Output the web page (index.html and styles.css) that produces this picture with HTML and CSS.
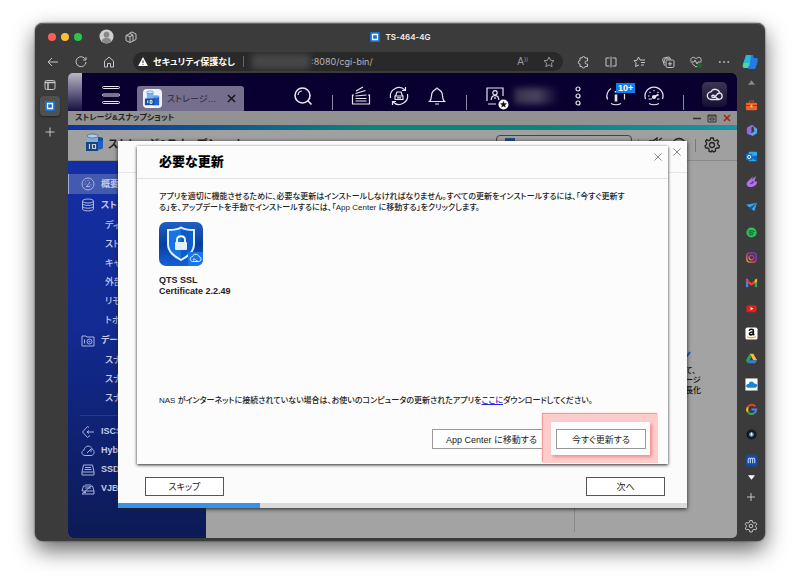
FILE: index.html
```
<!DOCTYPE html>
<html lang="ja">
<head>
<meta charset="utf-8">
<title>TS-464-4G</title>
<link rel="stylesheet" href="styles.css">
</head>
<body>
<div class="window">
  <header class="titlebar">
    <div class="lights"><i class="red"></i><i class="yellow"></i><i class="green"></i></div>
    <svg class="avatar" viewBox="0 0 16 16"><circle cx="8" cy="8" r="7.500" fill="#d0cdca"/><circle cx="8" cy="6" r="3" fill="#888"/><path d="M3 13c0-5 10-5 10 0a7 7 0 0 1-10 0z" fill="#888"/></svg>
    <svg class="ico" viewBox="0 0 14 14"><path d="M5 3.500 8 2l4 2v5.500L9 11M2 5.500l4-2 3 1.500v6L6 12.500 2 10.500zM9 5 6 6.500v6M2 5.500l4 1"/></svg>
    <div class="doc-title"><svg viewBox="0 0 10 10"><rect width="10" height="10" rx="1" fill="#1672d2"/><path d="M2.500 2.500h5v5h-5z" fill="none" stroke="#fff" stroke-width="1.300"/></svg>TS-464-4G</div>
  </header>

  <div class="toolbar">
    <nav class="history">
      <svg class="ico" viewBox="0 0 14 14"><path d="M12 7H2M6 3 2 7l4 4"/></svg>
      <svg class="ico" viewBox="0 0 14 14"><path d="M11.500 4.500A5 5 0 1 0 12 7M12 2v3H9"/></svg>
      <svg class="ico" viewBox="0 0 14 14"><path d="M2.500 6 7 2l4.500 4v6H8.500V8.500h-3V12h-3z"/></svg>
    </nav>
    <div class="address">
      <svg class="warn" viewBox="0 0 12 11"><path d="M6 0 12 11H0z" fill="#fff"/><path d="M6 4v3.500M6 8.500v1" stroke="#222" stroke-width="1.200"/></svg>
      <b>セキュリティ保護なし</b><i class="bar"></i><span class="smudge"></span><span class="url">:8080/cgi-bin/</span>
      <span class="read">A<sup>))</sup></span>
      <svg class="ico" viewBox="0 0 14 14"><path d="m7 2 1.500 3.300 3.500.4-2.600 2.400.7 3.600L7 9.900l-3.100 1.800.7-3.600L2 5.700l3.500-.4z" stroke="#999"/></svg>
    </div>
    <nav class="tools">
      <svg class="ico" viewBox="0 0 14 14"><path d="M4 3h2a1.500 1.500 0 0 1 3 0h2.500v3h-1a1.500 1.500 0 0 0 0 3h1v2.500H9a1.500 1.500 0 0 1-3 0H4V9a1.700 1.700 0 0 1 0-3.400z"/></svg>
      <svg class="ico" viewBox="0 0 14 14"><path d="M5.500 3H2v8h3.500M8.500 3H12v8H8.500M7 1.500v11"/></svg>
      <svg class="ico" viewBox="0 0 14 14"><path d="M7 10 3.500 11.500l.7-3.500L2 5.700l3-.4L6.500 2 8 5h5M9 7.500h4M9 10h3"/></svg>
      <svg class="ico" viewBox="0 0 14 14"><rect x="5" y="5" width="8" height="7.500" rx="1.500"/><path d="M9 6.800v4M7 8.800h4M3.500 10.500 1.500 4.500q0-1 1-1.300L7.500 2q1 0 1.500 1M3.200 8V5q0-1 1-1.200H10"/></svg>
      <svg class="ico" viewBox="0 0 14 14"><path d="M2 6C1 1 6 2 7 4c1-2 6-3 5 2M1.500 7H5l1-2 2 4 1-2h3.500M3 8.500 7 12l2-1.500"/><circle cx="10.500" cy="10.500" r="2.500" fill="#18681f" stroke="none"/></svg>
      <svg class="ico" viewBox="0 0 14 14"><path d="M2 7h1.700M6.200 7h1.700M10.400 7h1.700" stroke-width="1.700"/></svg>
    </nav>
    <svg class="copilot" viewBox="0 0 16 16"><path d="M4 1h6L8 12l-2 2H3c-2 0-3-1-2-4z" fill="#28b9d8"/><path d="M9 1h2l1 3h3c1 1 1 3 0 6l-2 5H6l2-4z" fill="#247be6"/><path d="M2 9h5l-1 5H3c-2 0-3-2-1-5z" fill="#55d4a0"/></svg>
  </div>

  <div class="body">
    <aside class="rail-left">
      <svg class="ico" viewBox="0 0 14 14"><rect x="2" y="2.500" width="10" height="9" rx="1.500"/><path d="M2 4.500h10M5 5v6" stroke-width="1.500"/></svg>
      <div class="pinned"><svg viewBox="0 0 10 10"><rect width="10" height="10" rx="1" fill="#1672d2"/><path d="M2.500 2.500h5v5h-5z" fill="none" stroke="#fff" stroke-width="1.300"/></svg></div>
      <svg class="ico add" viewBox="0 0 14 14"><path d="M7 2.500v9M2.500 7h9"/></svg>
    </aside>

    <main class="page">
      <div class="qts-bar">
        <span class="edge"></span>
        <svg class="burger" viewBox="0 0 18 20"><g fill="#0b0530" stroke="#e8e6ee"><rect x=".5" y="1.500" width="17" height="2" rx="1"/><rect x=".5" y="9" width="17" height="2" rx="1"/><rect x=".5" y="16.500" width="17" height="2" rx="1"/></g></svg>
        <div class="app-tab">
          <svg class="app-ico" viewBox="0 0 20 20"><rect width="20" height="20" rx="4" fill="#eef4fb"/><g fill="#2364cf"><path d="M10 8h7v9h-7z"/><ellipse cx="13.500" cy="8" rx="3.500" ry="1.500" fill="#67a4ee"/></g><path d="M4 3h7v8H4z" fill="#7cb2ee"/><ellipse cx="7.500" cy="3.500" rx="3.500" ry="1.500" fill="#d5e8fc" stroke="#2d77d4" stroke-width=".6"/><rect x="2" y="10" width="10" height="7" fill="#174f96"/><path d="M5 12v3M7.500 12h2v3h-2z" fill="none" stroke="#fff"/></svg>
          <span>ストレージ…</span>
          <svg class="x" viewBox="0 0 10 10"><path d="m1 1 8 8M9 1 1 9" stroke="#17131f" stroke-width="1.600"/></svg>
        </div>
        <div class="status">
          <svg viewBox="0 0 20 20"><circle cx="9.500" cy="9.500" r="7.500" stroke-width="1.600"/><path d="m15 15 3.500 3.500" stroke-width="1.600"/><path d="M5 9a4.500 4.500 0 0 1 4-4"/></svg><i></i>
          <svg viewBox="0 0 20 20"><path d="M3 9H1.500v9h17V9H17M4.500 15h11M4.500 12.500h11M4.500 10l11-1M4.500 7.500l10-3M5 5l7-4"/></svg>
          <svg viewBox="0 0 20 20"><path d="M1.500 12A8.700 8.700 0 0 1 16 4M18.500 8A8.700 8.700 0 0 1 4 16M16.500 1v3.500H13M3.500 19v-3.500H7M6.500 10 8 6h4l1.500 4M6 10h8v3.500H6zM8 11.800h4"/></svg>
          <svg viewBox="0 0 20 20"><path d="M2.500 15.500c2.500-2 1.500-5.500 2.500-8.500C6 4.500 8 4 9 3q1-2 2 0c1 1 3 1.500 4 4 1 3 0 6.500 2.500 8.500zM8 18h4"/></svg><i></i>
          <svg viewBox="0 0 20 20"><path d="M11 18H3M2 15V2h16v8M6 14l1.200-3.500L10 9.500l2.800 1L14 14M10 11v2"/><circle cx="10" cy="6.800" r="2.200"/><circle cx="18.500" cy="18.500" r="5" fill="#fff" stroke="none"/><path d="m18.500 15 1 2.300 2.500.2-1.900 1.600.6 2.400-2.200-1.300-2.200 1.300.6-2.400-1.900-1.600 2.500-.2z" fill="#111" stroke="none"/></svg>
        </div>
        <span class="user"></span>
        <div class="status">
          <svg viewBox="0 0 20 20"><circle cx="10" cy="3" r="2"/><circle cx="10" cy="10" r="2"/><circle cx="10" cy="17" r="2"/></svg>
          <div class="notice"><svg viewBox="0 0 20 20"><path d="M5 2.500a9 9 0 0 0-3.500 11M18.500 8v5.500M5 17.500q5 2.500 10 0"/><path d="M10 8.500v7M10 5v1.500" stroke-width="2.600"/></svg><b>10+</b></div>
          <svg viewBox="0 0 20 20"><path d="M1.500 13A9 9 0 1 1 18.500 13M5 17.500q5 2.500 10 0"/><path d="M4 10h1.500M5.500 6l1 .8M10 4v1.200M14.500 6l-1 .8M4.500 13H8M13 13h2.500" /><path d="m10 11 4.500-2.500" stroke-width="2"/><circle cx="10" cy="11" r="1.500" fill="#e8e6ee"/></svg><i></i>
        </div>
        <div class="cloud"><svg viewBox="0 0 20 16"><path d="M15 13.500H6A4.200 4.200 0 0 1 5.500 5a5.200 5.200 0 0 1 9.700 1.300A3.700 3.700 0 0 1 15 13.500c-2.500 0-3.500-2-5-3.500S6.300 8.300 6.500 10s2.500 1.500 3.500.500 2-3.700 5-4.200" fill="none" stroke="#e8e6ee" stroke-width="1.500"/></svg></div>
      </div>

      <div class="app-title"><b>ストレージ&amp;スナップショット</b>
        <svg viewBox="0 0 40 10"><path d="M1 5.500h8" stroke="#333" stroke-width="1.500"/><path d="M16 2h8v7h-8zM18 5h4v2h-4zM16 3h8" fill="none" stroke="#333"/><path d="m32 2 6 6M38 2l-6 6" stroke="#b01b1b" stroke-width="1.700"/></svg>
      </div>
      <div class="app-head">
        <svg class="logo" viewBox="0 0 20 20"><path d="M9 5h9v10c-2 2-6 2-9 1z" fill="#205fc4"/><ellipse cx="13.500" cy="6" rx="4.500" ry="2" fill="#174a9f"/><path d="M2 3h11v8H2z" fill="#84aed7"/><ellipse cx="7.500" cy="3" rx="5.500" ry="2" fill="#b8c8d8" stroke="#2960a8" stroke-width=".7"/><rect x="1" y="9" width="12" height="9" fill="#144580"/><path d="M4.500 11v5M7.500 11.500h3v4h-3z" fill="none" stroke="#ccc" stroke-width="1.200"/></svg>
        <b>ストレージ&amp;スナップショット</b>
        <div class="device"><i></i>外部ストレージデバイス</div>
        <div class="head-tools"><i></i><svg viewBox="0 0 16 16"><path d="M2 4h4l4-3v12M12 3l3-2"/></svg><svg viewBox="0 0 16 16"><circle cx="8" cy="8" r="6.500"/></svg><i></i>
        <svg viewBox="0 0 16 16"><circle cx="8" cy="8" r="2.500"/><path d="m6.700 1-.5 2-1.700.7-1.900-1L1.500 4.300l1.200 1.900L2.200 8l-1.200 1 .8 2 2-.1 1.300 1.300-.1 2 2 .8L8 13.500l1.500 1.500 2-.9-.1-2 1.300-1.200 2 .1.800-2L14 7.700l-.5-1.500 1-1.900-1.300-1.500-1.900 1-1.700-.7L9.200 1z"/></svg></div>
      </div>

      <div class="workspace">
        <nav class="side">
          <a class="main current"><svg viewBox="0 0 14 14"><circle cx="7" cy="7" r="6"/><path d="m6 9 3-4M3.500 7h1M7 3v1M9.500 8h1M4.500 4.500l.5.500M5 9.500h4"/></svg>概要</a>
          <a class="main"><svg viewBox="0 0 14 14"><ellipse cx="7" cy="3" rx="5.500" ry="2"/><path d="M1.500 3v8c0 2.500 11 2.500 11 0V3M1.500 5.500c0 2.500 11 2.500 11 0M1.500 8.300c0 2.500 11 2.500 11 0"/></svg>ストレージ</a>
          <a>ディスク</a><a>ストレージ</a><a>キャッシュ</a><a>外部</a><a>リモート</a><a>トポロジ</a>
          <a class="main data"><svg viewBox="0 0 14 14"><path d="M1 2h4l1 1h7v9H1zM3.500 5.500v4"/><circle cx="8.500" cy="7.500" r="2.500"/><circle cx="8.500" cy="7.500" r=".6"/></svg>データ</a>
          <a>スナップ</a><a>スナップ</a><a>スナップ</a>
          <hr>
          <a class="main"><svg viewBox="0 0 14 14"><path d="M8 2.500 6.500 1.500 1.500 7l5 5.500L9 10.500M6 7h7M8 5.500 6 7l2 1.500"/></svg>ISCSI</a>
          <a class="main"><svg viewBox="0 0 14 14"><path d="M4 11.500C0 11 0 7 3 6c1-5 7-5 8-1 3 1 3 6-1 6.500zM6 9l4-4v3"/></svg>Hybrid</a>
          <a class="main"><svg viewBox="0 0 14 14"><path d="M1 9 2.500 2h9L13 9v3H1zM1 9h12M3.500 6.500h7M4 4.500h6"/></svg>SSD</a>
          <a class="main"><svg viewBox="0 0 14 14"><path d="M1 9 2.500 4H4M10 4h1.500L13 9v3H1zM1 9h12M5 7V2M7 2v5M9 7V2M3 10.500h2"/></svg>VJBOD</a>
        </nav>
        <section class="content"><div class="notes"><svg viewBox="0 0 8 6"><path d="M0 5h2l3-4" fill="none" stroke="#244bb5" stroke-width="2"/></svg>て、<br>ージ<br>長化</div><span class="divider"></span></section>
      </div>

      <section class="wizard">
        <div class="wizard-head"><button class="close" aria-label="閉じる"><svg viewBox="0 0 8 8"><path d="m.5.500 7 7M7.500.500l-7 7"/></svg></button></div>
        <div class="wizard-foot"><button>スキップ</button><button>次へ</button></div>
        <div class="progress"><i></i></div>

        <div class="dialog" role="dialog" aria-labelledby="dialog-title">
          <div class="dialog-head"><h1 id="dialog-title">必要な更新</h1><button class="close" aria-label="閉じる"><svg viewBox="0 0 8 8"><path d="m.5.500 7 7M7.500.500l-7 7"/></svg></button></div>
          <div class="dialog-body">
            <p>アプリを適切に機能させるために、必要な更新はインストールしなければなりません。すべての更新をインストールするには、「今すぐ更新す<br>る」を、アップデートを手動でインストールするには、「App Center に移動する」をクリックします。</p>
            <svg class="cert" viewBox="0 0 44 44"><defs><linearGradient id="bg" x1="0" y1="0" x2="0" y2="1"><stop stop-color="#205fc0"/><stop offset=".5" stop-color="#083f9e"/><stop offset="1" stop-color="#1660d8"/></linearGradient><linearGradient id="sh" x1="0" x2="1"><stop offset=".5" stop-color="#1674e4"/><stop offset=".5" stop-color="#0d5ccb"/></linearGradient></defs><rect width="44" height="44" rx="7" fill="url(#bg)"/><path d="M22 5.500c4 2.500 8 2.500 13 2.500v14c0 8-6 12-13 16C15 34 9 30 9 22V8c5 0 9 0 13-2.500z" fill="url(#sh)" stroke="#dff2ff" stroke-width="2"/><path d="M18 21v-3c0-5 8-5 8 0v3" fill="none" stroke="#fff" stroke-width="1.800"/><rect x="16" y="20" width="12" height="8" rx="1" fill="#e2f0ff"/><path d="M29 30h15v7q0 7-7 7h-8z" fill="#1b75ea"/><path d="M39.500 39.500h-6c-3.500-1-2.500-5 0-5 1-3 5.500-3 6.500 0 3 1 2.500 5-.5 5-2 0-2.500-2-4-2.500s-1.500 1.300-.5 1.300" fill="none" stroke="#fff" stroke-width=".9"/></svg>
            <b class="pkg">QTS SSL<br>Certificate 2.2.49</b>
            <p class="offline">NAS がインターネットに接続されていない場合は、お使いのコンピュータの更新されたアプリを<a href="#">ここに</a>ダウンロードしてください。</p>
            <div class="actions"><button class="center">App Center に移動する</button><div class="marked"><button class="update">今すぐ更新する</button></div></div>
          </div>
        </div>
      </section>
    </main>

    <aside class="rail-right">
      <svg class="tri" viewBox="0 0 8 5"><path d="m4 0 4 5H0z" fill="#888"/></svg>
      <div class="apps">
        <svg viewBox="0 0 14 14"><path d="M5 4V2h4v2" fill="none" stroke="#b64217" stroke-width="1.300"/><rect x="1" y="4" width="12" height="8" rx="1" fill="#ed6226"/><path d="M1 7h12" stroke="#963818"/><path d="M6 6h2v3H6z" fill="#ffc184"/></svg>
        <svg viewBox="0 0 14 14"><path d="M7 1 2 4v6l3 2 2-2V4l3-2z" fill="#9268e3"/><path d="m9 2 4 3v5l-5 3-3-2 5-3z" fill="#5aa0eb"/></svg>
        <svg viewBox="0 0 14 14"><rect x="4" y="2" width="9" height="10" rx="1" fill="#35a9ec"/><path d="m4 7 9 5V6z" fill="#1268bd"/><rect x="1" y="4" width="7" height="7" rx="1" fill="#1473c6"/><circle cx="4.500" cy="7.500" r="1.700" fill="none" stroke="#fff"/></svg>
        <svg viewBox="0 0 14 14"><path d="M2 8 9 1 7 5l5-4-2 6h3c0 4-4 6-7 6C3 13 1 11 2 8z" fill="#b371ed"/><path d="m5 10 4-4v3z" fill="#493077"/></svg>
        <svg viewBox="0 0 14 14"><path d="m1 5 12-2-3 9-4-3z" fill="#36a5e4"/><path d="M5 8 13 3 6 11z" fill="#0d5d91"/></svg>
        <svg viewBox="0 0 14 14"><circle cx="7" cy="7" r="5.500" fill="#23c65b"/><path d="M4 5.500q4-1 6.500.5M4 7.500q3-.8 5.500.5M4.500 9.500q2.500-.5 4 .3" fill="none" stroke="#174524"/></svg>
        <svg viewBox="0 0 14 14"><defs><linearGradient id="ig" x1="1" y1="0" x2="0" y2="1"><stop stop-color="#7a36d5"/><stop offset=".5" stop-color="#dc2786"/><stop offset="1" stop-color="#ef9b33"/></linearGradient></defs><g fill="none" stroke="url(#ig)" stroke-width="1.500"><rect x="2" y="2" width="10" height="10" rx="3"/><circle cx="7" cy="7" r="2.500"/></g></svg>
        <svg viewBox="0 0 14 14"><path d="M1 3h2.500v9H1z" fill="#4285f4"/><path d="M10.500 3H13v9h-2.500z" fill="#34a853"/><path d="m1 3 6 4.500L13 3v3L7 10.500 1 6z" fill="#ea4335"/><path d="m10.500 4.800 2.500-2V6l-2.500 2z" fill="#fbbc04"/></svg>
        <svg viewBox="0 0 14 14"><rect x="1.500" y="3.500" width="11" height="7.500" rx="2" fill="#e61d1d"/><path d="m6 5.500 3 1.700L6 9z" fill="#fff"/></svg>
        <svg viewBox="0 0 14 14"><rect x=".5" y=".5" width="13" height="13" rx="2" fill="#fff"/><path d="M4.500 4C5 2 9 2 9 4v4l1 .8M9 5.500C4 5 4 8.500 6 8.500S9 7 9 6" fill="none" stroke="#111" stroke-width="1.700"/><path d="M2.500 10.500q5 2.500 9-.3" fill="none" stroke="#f39b21" stroke-width="1.200"/></svg>
        <svg viewBox="0 0 14 14"><path d="M5 2h4l4 7H9z" fill="#f8bd2b"/><path d="M5 2 1 9l2 3 4-7z" fill="#25a55a"/><path d="M5 9h8l-2 3H3z" fill="#3b78e7"/></svg>
        <svg viewBox="0 0 14 14"><rect x=".5" y=".5" width="13" height="13" fill="#fff"/><path d="M3 10.500c-3-1-2-4 1-4 1-4 5-3 6-.5 4 0 4 4 1 4.500z" fill="#1685d8"/></svg>
        <svg viewBox="0 0 14 14"><g fill="none" stroke-width="2.200"><path d="M11 3.500A5 5 0 0 0 3 4.500" stroke="#ea4335"/><path d="M3 4.500a5 5 0 0 0 0 5" stroke="#fbbc04"/><path d="M3 9.500a5 5 0 0 0 7 1.500" stroke="#34a853"/><path d="M10 11a5 5 0 0 0 2-4H7" stroke="#4285f4"/></g></svg>
        <svg viewBox="0 0 14 14"><circle cx="7" cy="7" r="5.500" fill="#111a27"/><circle cx="7" cy="7" r="2.500" fill="#86a4b6"/><path d="M7 5v3" stroke="#fff"/></svg>
        <svg viewBox="0 0 14 14"><rect x=".5" y=".5" width="13" height="13" rx="2" fill="#1748a0"/><path d="M3.500 10V6c0-2 2.300-2 2.300 0v4-4c0-2 2.400-2 2.400 0v4-4c0-2 2.300-2 2.300 0v4" fill="none" stroke="#a9c8f6" stroke-width="1.300"/></svg>
      </div>
      <svg class="tri lower" viewBox="0 0 8 5"><path d="M0 0h8L4 5z" fill="#fff"/></svg>
      <svg class="ico plus" viewBox="0 0 14 14"><path d="M7 3v8M3 7h8"/></svg>
      <svg class="ico cog" viewBox="0 0 14 14"><circle cx="7" cy="7" r="1.800"/><path d="m5.800 1.500-.3 1.800-1.500.8-1.700-.6L1.200 5.600l1.400 1.200v1L1.200 9l1.100 2 1.700-.7 1.500.9.300 1.800h2.400l.3-1.800 1.500-.9 1.700.7 1.100-2-1.400-1.200v-1l1.400-1.200-1.100-2.100-1.700.6-1.500-.8-.3-1.800z"/></svg>
    </aside>
  </div>
</div>
</body>
</html>
```
FILE: styles.css
```
* { box-sizing: border-box; }
body {
  margin: 0;
  min-height: 100vh;
  padding: 23px 35px 46px;
  display: flex;
  background: #fff;
  font-family: "Liberation Sans", "Noto Sans CJK JP", sans-serif;
  font-feature-settings: "palt";
  font-size: 8px;
  color: #222;
}
svg { display: block; flex: none; }
button { font: inherit; font-size: 9px; color: #222; padding: 0; }
.window {
  flex: 1;
  min-width: 0;
  display: flex;
  flex-direction: column;
  background: #3b3b3b;
  border-radius: 8px;
  box-shadow: inset 0 1px 0 #666, 0 0 2px #333, 0 9px 22px rgba(0, 0, 0, .6);
}
.ico { width: 14px; height: 14px; fill: none; stroke: #c4c4c4; stroke-width: 1; }

/* Browser chrome */
.titlebar { height: 27px; display: flex; align-items: center; padding-left: 13px; }
.lights { display: flex; gap: 5px; margin-right: 17px; }
.lights i { width: 8px; height: 8px; border-radius: 50%; }
.red { background: #fb5e58; }
.yellow { background: #fdbc38; }
.green { background: #2bc648; }
.avatar { width: 15px; height: 15px; margin-right: 10px; }
.doc-title { flex: 1; display: flex; justify-content: center; align-items: center; gap: 5px; padding-right: 102px; color: #eee; font: 600 8px Inter, sans-serif; }
.doc-title svg, .pinned svg { width: 10px; height: 10px; }
.toolbar { height: 23px; display: flex; align-items: center; padding: 0 7px 0 11px; }
.history { display: flex; gap: 14px; margin-right: 17px; }
.address { flex: 1; height: 19px; display: flex; align-items: center; background: #292929; border-radius: 10px; padding: 0 7px 0 5px; color: #fff; }
.address b { font-size: 9px; }
.warn { width: 10px; height: 9px; margin-right: 5px; }
.bar { width: 1px; height: 11px; background: #666; margin: 0 8px; }
.smudge { width: 58px; height: 15px; background: #474747; filter: blur(3px); }
.url { font: 9px Inter, sans-serif; color: #b5b5b5; margin-left: 1px; }
.read { margin-left: auto; margin-right: 14px; color: #999; font-size: 10px; }
.read sup { font-size: 6px; }
.tools { display: flex; justify-content: space-between; width: 155px; margin: 0 11px 0 13px; }
.copilot { width: 16px; height: 16px; }
.body { flex: 1; display: flex; padding-bottom: 3px; min-height: 465px; }
.rail-left { width: 33px; display: flex; flex-direction: column; align-items: center; padding: 5px 3px 0 0; }
.pinned { width: 20px; height: 20px; margin: 4px 0 2px; display: grid; place-items: center; background: #505050; border-radius: 4px; box-shadow: 0 1px 2px #222; }
.add { margin-top: 7px; }
.rail-right { width: 28px; display: flex; flex-direction: column; align-items: center; }
.tri { width: 7px; height: 5px; margin: 7px 0 8px; }
.apps { flex: 1; display: flex; flex-direction: column; justify-content: space-around; }
.apps svg { width: 13px; height: 13px; }
.lower { margin: 2px 0 8px; }
.plus { margin: 2px 0 7px; }
.cog { margin: 8px 0 5px; }

/* NAS desktop */
.page { flex: 1; min-width: 0; display: flex; flex-direction: column; position: relative; border-radius: 5px; overflow: hidden; background: #a3a3a3; }
.qts-bar { height: 38px; flex: none; display: flex; background: #0a0030; padding-right: 10px; }
.edge { width: 14px; background: linear-gradient(#b9b6c6, #151040); }
.burger { width: 18px; height: 20px; margin: 12px 17px 0 20px; }
.app-tab { width: 107px; margin-top: 13px; display: flex; align-items: center; gap: 5px; padding: 0 8px 0 6px; background: #756f8d; border-radius: 3px 3px 0 0; font-size: 9px; color: #2b2638; }
.app-ico { width: 19px; height: 19px; }
.x { width: 9px; height: 9px; margin-left: auto; }
.status { display: flex; padding-top: 13px; }
.app-tab + .status { margin-left: 40px; }
.status svg { width: 20px; height: 20px; margin: 0 9px; fill: none; stroke: #e8e6ee; stroke-width: 1.200; overflow: visible; }
.status > i { width: 1px; height: 15px; margin: 9px 9px 0 10px; background: #8b87a5; }
.user { flex: 1; height: 16px; margin-top: 15px; background: linear-gradient(90deg, #37304f, #4b4561, #0a0030); filter: blur(3px); }
.notice { position: relative; }
.notice b { position: absolute; left: 19px; top: -3px; padding: 0 2px; line-height: 10px; background: #147bea; color: #fff; font-size: 9px; }
.cloud { width: 25px; height: 25px; margin: 9px 0 0 9px; display: grid; place-items: center; background: linear-gradient(#3b3551, #151033); border-radius: 5px; }
.cloud svg { width: 18px; height: 15px; }
.app-title { height: 19px; flex: none; display: flex; justify-content: space-between; padding: 0 5px 0 7px; line-height: 14px; background: #929292; border-bottom: 5px solid; border-image: linear-gradient(90deg, #0e31a0, #12807d 45%, #128080 70%, #1b93a4) 1; }
.app-title svg { width: 40px; height: 10px; margin-top: 2px; }
.app-head { height: 31px; flex: none; display: flex; align-items: center; padding: 0 17px; background: #a0a0a0; border-bottom: 1px solid #898989; font-size: 11px; white-space: nowrap; }
.logo { width: 20px; height: 20px; margin: 0 3px 4px 0; }
.app-head b { padding-bottom: 4px; }
.device { width: 136px; height: 20px; margin: 0 6px 0 auto; display: flex; align-items: center; gap: 6px; padding-left: 8px; border: 1px solid #444; border-radius: 4px; font-size: 9px; }
.device i { width: 10px; height: 14px; background: #234a7e; }
.head-tools { display: flex; align-items: center; gap: 8px; }
.head-tools i { width: 1px; height: 13px; background: #777; }
.head-tools svg { width: 16px; height: 16px; fill: none; stroke: #222; stroke-width: 1.300; }
.workspace { flex: 1; display: flex; }
.side { width: 138px; padding-top: 13px; background: linear-gradient(#142fa5, #122a91 45%, #0c1a55); color: #c3cae6; }
.side a { display: block; height: 19px; line-height: 19px; padding-left: 37px; font-size: 9px; font-weight: 500; white-space: nowrap; }
.side .main { display: flex; align-items: center; gap: 6px; height: 19px; padding-left: 13px; font-weight: bold; }
.side .current { height: 20px; padding-left: 12px; border-left: 1px solid #9cacdf; background: #435aae; }
.side .current + .main { height: 22px; }
.side .data { height: 21px; }
.side svg { width: 14px; height: 14px; fill: none; stroke: #a9b3dc; stroke-width: 1; }
.side hr { height: 1px; margin: 7px 0 6px 12px; border: 0; background: #2b3c85; }
.content { flex: 1; display: flex; flex-direction: column; align-items: flex-end; padding: 190px 33px 6px 0; }
.notes { width: 19px; line-height: 10px; font-weight: 500; color: #111; }
.notes svg { width: 8px; height: 6px; margin-bottom: 9px; }
.divider { width: 1px; height: 24px; margin: auto 129px 0 0; background: #888; }

/* Setup wizard and the update dialog over it */
.wizard { position: absolute; inset: 68px 50px 30px; display: flex; flex-direction: column; background: #fbfbfb; box-shadow: 0 1px 4px #222; }
.wizard-head { height: 32px; display: flex; justify-content: flex-end; padding: 6px 5px; border-bottom: 1px solid #e5e5e5; }
.close { width: 9px; height: 9px; border: 0; background: none; }
.close svg { width: 8px; height: 8px; fill: none; stroke: #8b8b8b; stroke-width: 1; }
.wizard-foot { margin-top: auto; display: flex; justify-content: space-between; padding: 0 22px 7px 27px; }
.wizard-foot button { width: 79px; height: 19px; border: 1px solid #555; background: #fff; }
.progress { height: 5px; background: #dadcdb; }
.progress i { display: block; width: 25%; height: 5px; background: #3693eb; }
.dialog { position: absolute; inset: 5px 19px 44px; display: flex; flex-direction: column; background: #fcfcfc; box-shadow: 0 1px 3px #222; }
.dialog-head { height: 33px; display: flex; justify-content: space-between; align-items: center; padding: 0 5px 0 22px; border-bottom: 1px solid #e2e2e2; }
.dialog-head .close { margin-bottom: 11px; }
h1 { margin: 0; padding-bottom: 3px; font-size: 13px; font-weight: 900; color: #000; }
.dialog-body { flex: 1; display: flex; flex-direction: column; padding: 12px 22px 15px; }
p { margin: 0; line-height: 11px; font-weight: 500; white-space: nowrap; }
.cert { width: 44px; height: 44px; margin: 9px 0 9px; }
.pkg { font-size: 9px; line-height: 11px; }
.offline { margin-top: auto; }
.offline a { color: #2626d8; }
.actions { display: flex; justify-content: flex-end; gap: 5px; margin-top: 23px; }
.actions button { height: 20px; border: 1px solid #999; background: #fff; }
.center { width: 119px; }
.update { width: 90px; }
.marked { position: relative; }
.marked::before, .marked::after { content: ""; position: absolute; pointer-events: none; }
.marked::after { inset: -15px -12px -14px -13px; border: 8px solid #fdcdcc; box-shadow: -1px -1px 1px #f59a9a; }
.marked::before { z-index: 1; inset: -7px -4px -6px -5px; box-shadow: 2px 2px 3px #ee8d8d; }
```
